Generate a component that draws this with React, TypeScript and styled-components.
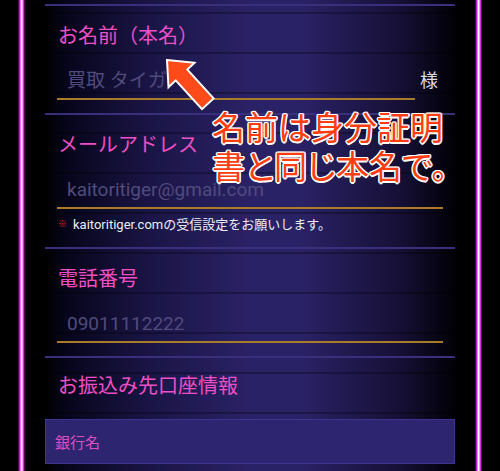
import React from "react";
import styled, { createGlobalStyle } from "styled-components";

const Global = createGlobalStyle`
  html, body { margin: 0; padding: 0; background: #000; }
  body { width: 500px; height: 471px; overflow: hidden; }
`;

const Page = styled.div`
  position: relative;
  width: 500px;
  height: 471px;
  overflow: hidden;
  background:
    repeating-linear-gradient(
      to bottom,
      transparent 0px,
      transparent 12px,
      rgba(0, 0, 0, 0.3) 12px,
      rgba(0, 0, 0, 0.3) 14px,
      transparent 14px,
      transparent 40px
    ),
    linear-gradient(
      90deg,
      #000 0%,
      #000 9%,
      #06051a 13%,
      #1a1546 30%,
      #2a2266 50%,
      #2a2266 60%,
      #161036 80%,
      #04030e 89%,
      #000 92%,
      #000 100%
    );

  &::before,
  &::after {
    content: "";
    position: absolute;
    top: 0;
    bottom: 0;
    width: 7px;
    background: linear-gradient(
      90deg,
      transparent 0%,
      #8a0a96 14%,
      #ff40ff 32%,
      #ffffff 48%,
      #ffd0ff 58%,
      #ff40ff 74%,
      #8a0a96 88%,
      transparent 100%
    );
  }
  &::before { left: 18px; }
  &::after { left: 475px; }
`;

const Column = styled.div`
  width: 410px;
  margin: 0 45px;
  padding-top: 4px;
`;

const Separator = styled.div`
  height: 2px;
  background: #3a2f7c;
`;

const Section = styled.section<{ $top?: number; $bottom?: number }>`
  padding: ${(p) => p.$top ?? 17}px 0 ${(p) => p.$bottom ?? 13}px;
`;

const Label = styled.div`
  padding-left: 13px;
  font-family: "Noto Sans CJK JP", sans-serif;
  font-size: 20px;
  line-height: 24px;
  color: #ee4fc6;
`;

const InputRow = styled.div`
  display: flex;
  align-items: center;
  margin: 11px 0 0 12px;
  gap: 5px;
`;

const Field = styled.input<{ $width: number }>`
  box-sizing: border-box;
  width: ${(p) => p.$width}px;
  height: 42px;
  padding: 5px 0 0 10px;
  border: none;
  border-bottom: 2px solid #aa7c2a;
  background: transparent;
  outline: none;
  font-family: Roboto, "Noto Sans CJK JP", sans-serif;
  font-size: 19px;
  color: #d8d8e6;
  &::placeholder {
    color: #504b7c;
  }
`;

const Suffix = styled.span`
  font-family: "Noto Sans CJK JP", sans-serif;
  font-size: 18px;
  color: #dcdce6;
`;

const Note = styled.div`
  display: flex;
  align-items: center;
  margin: 5px 0 0 13px;
  height: 18px;
  font-family: Roboto, "Noto Sans CJK JP", sans-serif;
  font-size: 13px;
  color: #ececf4;
`;

const Mark = styled.span`
  color: #e8202a;
  font-size: 9px;
  width: 15px;
`;

const BankBox = styled.div`
  box-sizing: border-box;
  margin-top: 22px;
  height: 45px;
  display: flex;
  align-items: center;
  padding-left: 9px;
  background: #2e2570;
  border: 1px solid #3d3390;
  font-family: "Noto Sans CJK JP", sans-serif;
  font-size: 15px;
  color: #e04cc2;
`;

const Arrow = styled.svg`
  position: absolute;
  left: 160px;
  top: 55px;
  width: 60px;
  height: 60px;
  overflow: visible;
`;

const Callout = styled.div`
  position: absolute;
  left: 212px;
  top: 107px;
  font-family: "Noto Sans CJK JP", sans-serif;
  font-size: 33px;
  line-height: 39px;
  font-feature-settings: "palt";
  color: #ff3d12;
  white-space: nowrap;
  text-shadow:
    1.5px 0 0 #fff, -1.5px 0 0 #fff, 0 1.5px 0 #fff, 0 -1.5px 0 #fff,
    1px 1px 0 #fff, -1px -1px 0 #fff, 1px -1px 0 #fff, -1px 1px 0 #fff,
    0 0 2px rgba(70, 70, 90, 0.9);
`;

export default function App() {
  return (
    <>
      <Global />
      <Page>
        <Column>
          <Separator />
          <Section>
            <Label>お名前（本名）</Label>
            <InputRow>
              <Field $width={358} placeholder="買取 タイガ" />
              <Suffix>様</Suffix>
            </InputRow>
          </Section>
          <Separator />
          <Section $bottom={15}>
            <Label>メールアドレス</Label>
            <InputRow>
              <Field $width={386} placeholder="kaitoritiger@gmail.com" />
            </InputRow>
            <Note>
              <Mark>※</Mark>
              kaitoritiger.comの受信設定をお願いします。
            </Note>
          </Section>
          <Separator />
          <Section>
            <Label>電話番号</Label>
            <InputRow>
              <Field $width={386} placeholder="09011112222" />
            </InputRow>
          </Section>
          <Separator />
          <Section $top={15} $bottom={0}>
            <Label>お振込み先口座情報</Label>
            <BankBox>銀行名</BankBox>
          </Section>
        </Column>
        <Arrow viewBox="0 0 60 60">
          <polygon
            points="7,5 34.5,7.7 27.3,14.6 53.6,43.4 42,54.2 15.7,25.4 8.5,32.3"
            fill="#ff4a1a"
            stroke="#fff"
            strokeWidth="2"
            strokeLinejoin="miter"
          />
        </Arrow>
        <Callout>
          名前は身分証明
          <br />
          書と同じ本名で。
        </Callout>
      </Page>
    </>
  );
}
